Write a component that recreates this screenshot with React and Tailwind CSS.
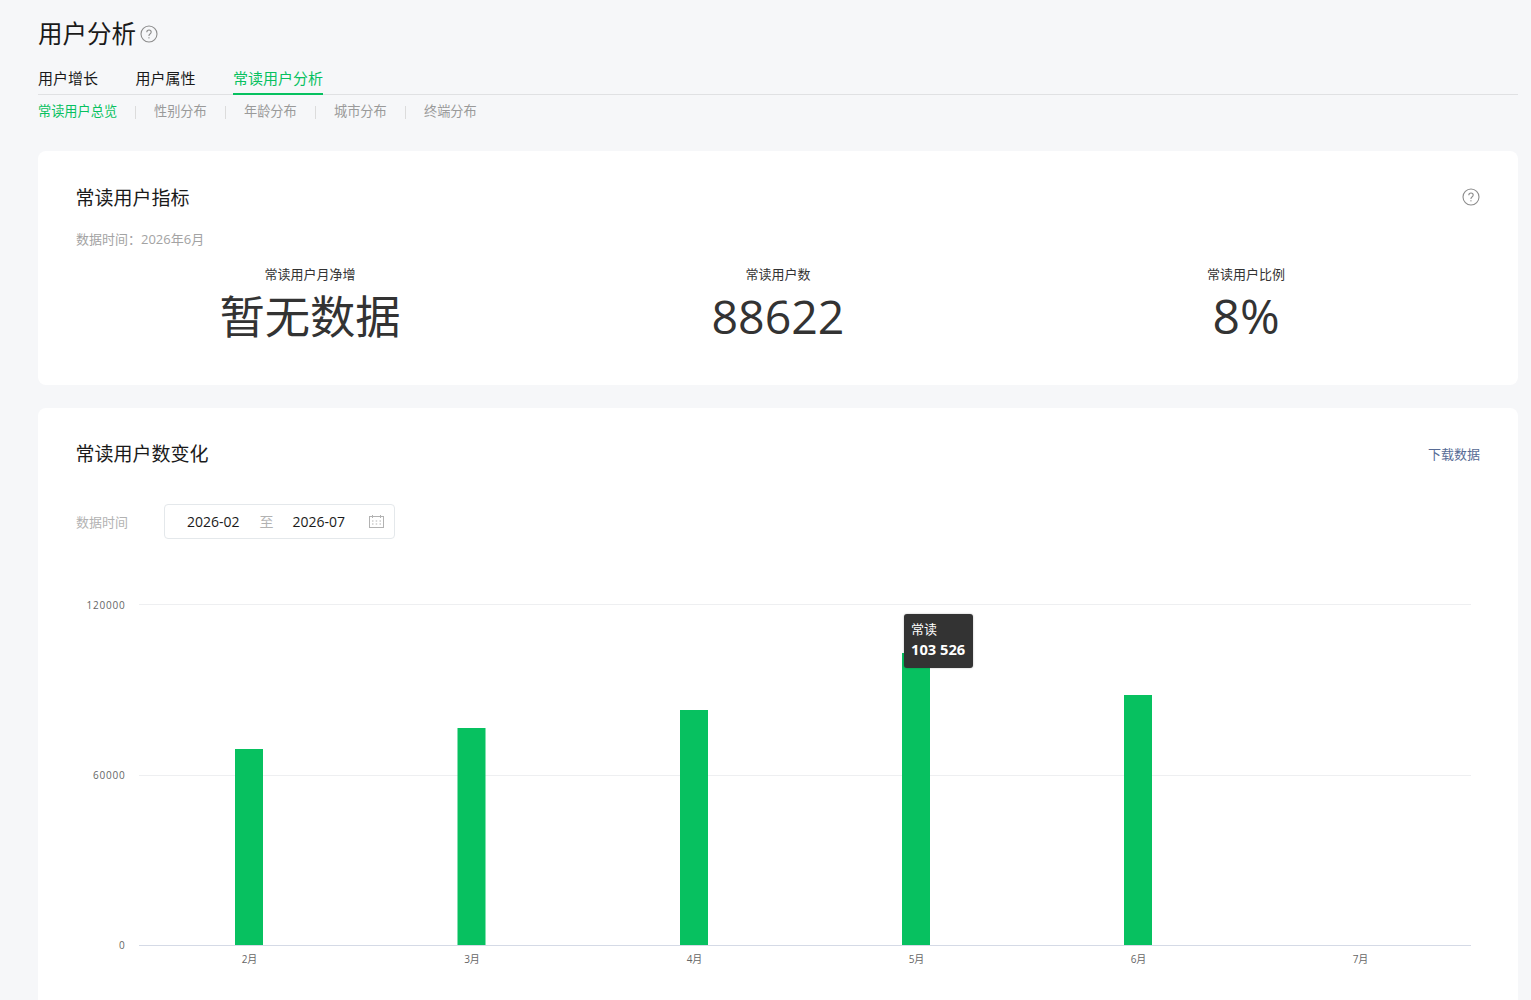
import React from 'react';

const FONT = '"Open Sans","Noto Sans CJK SC",sans-serif';

const subTabs = ['常读用户总览', '性别分布', '年龄分布', '城市分布', '终端分布'];

const stats = [
    { label: '常读用户月净增', value: '暂无数据', size: 'text-[45.3px] mt-[1px]' },
    { label: '常读用户数', value: '88622', size: 'text-[46.5px]' },
    { label: '常读用户比例', value: '8%', size: 'text-[48px]' },
];

const bars = [
    { x: 197, top: 749, label: '2月' },
    { x: 419.5, top: 728, label: '3月' },
    { x: 642, top: 710, label: '4月' },
    { x: 864, top: 653, label: '5月' },
    { x: 1086, top: 695, label: '6月' },
    { x: 1308, top: null, label: '7月' },
];

function HelpIcon({ className }) {
    return (
        <svg className={className} viewBox="0 0 18 18" fill="none">
            <circle cx="9" cy="9" r="8" stroke="#8c8c8c" strokeWidth="1.1" />
            <path d="M6.8 7.2c0-1.3 1-2.2 2.2-2.2s2.2.9 2.2 2.1c0 1-.6 1.5-1.2 1.9-.7.5-1 .8-1 1.6v.4" stroke="#8c8c8c" strokeWidth="1.1" />
            <rect x="8.4" y="12.2" width="1.1" height="1.2" fill="#8c8c8c" />
        </svg>
    );
}

function CalendarIcon() {
    return (
        <svg className="w-[15px] h-[13px]" viewBox="0 0 15 13" fill="none">
            <rect x="0.5" y="1.5" width="14" height="11" stroke="#b2b2b2" />
            <path d="M3.5 0v3M11.5 0v3" stroke="#b2b2b2" />
            <path d="M3 6h1.5M6.7 6h1.5M10.5 6H12M3 9h1.5M6.7 9h1.5M10.5 9H12" stroke="#b2b2b2" />
        </svg>
    );
}

function Chart() {
    return (
        <svg className="block w-[1480px] h-[400px]" viewBox="0 0 1480 400" fill="none">
            <path d="M101 23.5H1433M101 194.5H1433" stroke="#eeeff1" />
            <path d="M101 364.5H1433" stroke="#d5dae6" />
            <g fill="#666" fontSize="10" letterSpacing="0.8" textAnchor="end">
                <text x="87.5" y="27.5">120000</text>
                <text x="87.5" y="198">60000</text>
                <text x="87.5" y="368">0</text>
            </g>
            {bars.map((b) => (
                <g key={b.label}>
                    {b.top && <rect x={b.x} y={b.top - 581} width="28" height={945 - b.top} fill="#07c160" />}
                    <text x={b.x + 14.5} y="382" fill="#666" fontSize="10" textAnchor="middle">{b.label}</text>
                </g>
            ))}
        </svg>
    );
}

export default function App() {
    return (
        <div className="min-h-screen h-[1000px] overflow-hidden bg-[#f6f7f9] pl-[38px] pr-[13px] text-[#1a1a1a]" style={{ fontFamily: FONT }}>
            <div className="flex items-center gap-[4px] pt-[4px] h-[64px]">
                <h1 className="text-[24.5px] leading-[36px] font-normal">用户分析</h1>
                <HelpIcon className="w-[18px] h-[18px]" />
            </div>

            <div className="flex gap-[37.5px] h-[31px] border-b border-[#e0e1e3]">
                <div className="text-[15px] leading-[29px]">用户增长</div>
                <div className="text-[15px] leading-[29px]">用户属性</div>
                <div className="text-[15px] leading-[29px] h-[31px] text-[#07c160] border-b-2 border-[#07c160]">常读用户分析</div>
            </div>

            <div className="flex items-center h-[34px]">
                {subTabs.map((t, i) => (
                    <React.Fragment key={t}>
                        {i > 0 && <div className="w-px h-[13px] bg-[#dcdcdc] mx-[18.5px]" />}
                        <div className={i === 0 ? 'text-[13.2px] w-[78px] whitespace-nowrap text-[#07c160]' : 'text-[13.2px] w-[52px] whitespace-nowrap text-[#9a9a9a]'}>{t}</div>
                    </React.Fragment>
                ))}
            </div>

            <section className="mt-[22px] bg-white rounded-[8px] h-[234px] px-[38px] pt-[32px]">
                <div className="flex items-center justify-between h-[30px]">
                    <h2 className="text-[19px] leading-[30px] font-normal -ml-[0.5px]">常读用户指标</h2>
                    <HelpIcon className="w-[18px] h-[18px] mb-[2px]" />
                </div>
                <div className="mt-[16px] text-[13px] leading-[20px] text-[#a3a3a3]">数据时间：2026年6月</div>
                <div className="grid grid-cols-3 mt-[15px]">
                    {stats.map((s) => (
                        <div key={s.label} className="flex flex-col items-center">
                            <div className="text-[13px] leading-[20px] text-[#333]">{s.label}</div>
                            <div className={`${s.size} leading-[64px] text-[#333]`}>{s.value}</div>
                        </div>
                    ))}
                </div>
            </section>

            <section className="relative mt-[23px] bg-white rounded-[8px] h-[640px] pt-[31px]">
                <div className="flex items-center justify-between h-[30px] px-[38px]">
                    <h2 className="text-[19px] leading-[30px] font-normal -ml-[0.5px]">常读用户数变化</h2>
                    <a className="text-[13px] text-[#576b95] mt-[2px]">下载数据</a>
                </div>
                <div className="flex items-center mt-[35px] px-[38px] h-[35px]">
                    <div className="w-[88px] text-[13px] text-[#b2b2b2] mt-[2px]">数据时间</div>
                    <div className="flex items-center w-[231px] h-[35px] border border-[#e4e8eb] rounded-[4px] pl-[22px] pr-[10px] text-[14px] text-[#1a1a1a]">
                        <span>2026-02</span>
                        <span className="ml-[20px] text-[#b2b2b2]">至</span>
                        <span className="ml-[19px]">2026-07</span>
                        <span className="ml-auto"><CalendarIcon /></span>
                    </div>
                </div>
                <div className="mt-[42px]">
                    <Chart />
                </div>
                <div className="absolute left-[866px] top-[206px] w-[69px] h-[54px] rounded-[3px] bg-[#333] px-[7px] pt-[6px] text-white shadow-[0_0_2px_rgba(0,0,0,0.3)]">
                    <div className="text-[13px] leading-[19px]">常读</div>
                    <div className="text-[14.7px] leading-[20px] font-bold whitespace-nowrap">103 526</div>
                </div>
            </section>
        </div>
    );
}
